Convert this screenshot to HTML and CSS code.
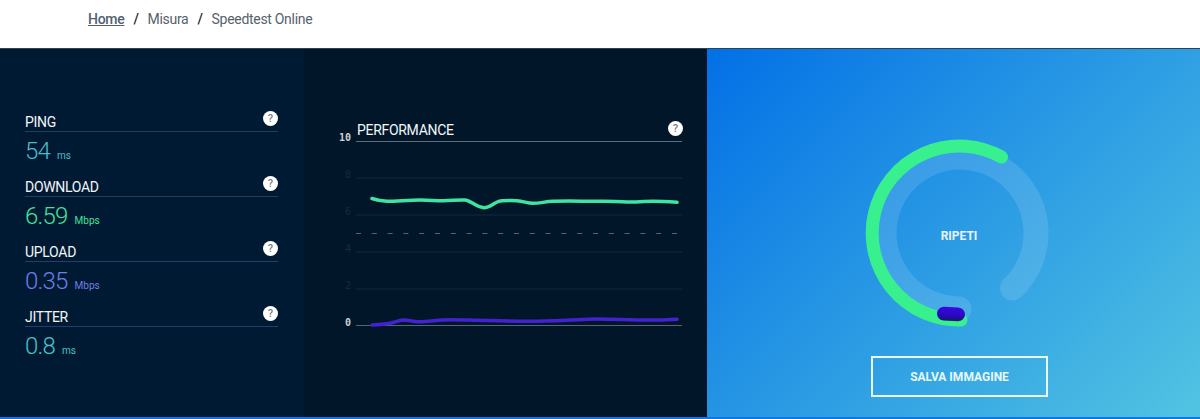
FILE: index.html
```html
<!DOCTYPE html>
<html>
<head>
    <meta charset="utf-8" />
    <title>Speedtest Online</title>
    <link rel="stylesheet" href="styles.css">
</head>
<body>
    <nav class="breadcrumb">
        <a href="#" class="crumb-home">Home</a>
        <span class="crumb-sep">/</span>
        <span>Misura</span>
        <span class="crumb-sep">/</span>
        <span>Speedtest Online</span>
    </nav>

    <main class="speedtest">
        <section class="results">
            <div class="metric metric-ping">
                <div class="metric-head"><span>PING</span><span class="help">?</span></div>
                <div class="metric-value">54 <small>ms</small></div>
            </div>
            <div class="metric metric-download">
                <div class="metric-head"><span>DOWNLOAD</span><span class="help">?</span></div>
                <div class="metric-value">6.59 <small>Mbps</small></div>
            </div>
            <div class="metric metric-upload">
                <div class="metric-head"><span>UPLOAD</span><span class="help">?</span></div>
                <div class="metric-value">0.35 <small>Mbps</small></div>
            </div>
            <div class="metric metric-jitter">
                <div class="metric-head"><span>JITTER</span><span class="help">?</span></div>
                <div class="metric-value">0.8 <small>ms</small></div>
            </div>
        </section>

        <section class="performance">
            <div class="performance-head"><span>PERFORMANCE</span><span class="help">?</span></div>
            <svg class="chart" viewBox="304 49 403 368" width="403" height="368">
                <line class="grid" x1="356" y1="178" x2="682" y2="178" />
                <line class="grid" x1="356" y1="215" x2="682" y2="215" />
                <line class="grid" x1="356" y1="252" x2="682" y2="252" />
                <line class="grid" x1="356" y1="289" x2="682" y2="289" />
                <line class="grid-mid" x1="356" y1="233.5" x2="680" y2="233.5" />
                <line class="grid-base" x1="356" y1="325.5" x2="682" y2="325.5" />
                <text class="tick tick-on" x="351" y="141" text-anchor="end">10</text>
                <text class="tick" x="351" y="178" text-anchor="end">8</text>
                <text class="tick" x="351" y="215" text-anchor="end">6</text>
                <text class="tick" x="351" y="252" text-anchor="end">4</text>
                <text class="tick" x="351" y="289" text-anchor="end">2</text>
                <text class="tick tick-on" x="351" y="326" text-anchor="end">0</text>
                <path class="line-down" d="M372 198.5 C378 200.5 381 201.2 387 201.3 C398 201.2 408 200 420 200 C430 200 435 200.7 443 200.7 C452 200.7 458 199.6 465 200 C471 200.6 477 207.7 484 207.7 C491 207.7 495 200.9 502 200.7 C508 200.5 511 200.4 517 200.7 C524 201.2 527 203.3 533 203.3 C540 203.3 545 201.6 553 201.3 C570 200.8 586 201.4 603 201.2 C612 201.1 618 202 627 202 C636 202 644 201.3 653 201.3 C662 201.3 668 201.7 677 202.3" />
                <path class="line-up" d="M372 325 C379 324.8 384 324.4 390 323.3 C395 322.3 398 320.2 404 320 C409 320 412 321.7 418 321.7 C429 321.6 439 319.7 450 319.7 C476 319.8 501 321.3 527 321.3 C541 321.3 553 320.9 567 320.3 C578 319.8 586 319 597 319 C616 319.2 634 320.1 653 320 C662 320 669 319.4 677 319.3" />
            </svg>
        </section>

        <section class="gauge-panel">
            <svg class="gauge" viewBox="0 0 200 200" width="200" height="200">
                <defs>
                    <linearGradient id="pillFill" x1="0" y1="0" x2="0" y2="1">
                        <stop offset="0" stop-color="#3c06e6" />
                        <stop offset="0.6" stop-color="#2a08c0" />
                        <stop offset="1" stop-color="#0f1a66" />
                    </linearGradient>
                </defs>
                <path class="gauge-track" d="M100 176 A76 76 0 1 1 153.5 155" />
                <path class="gauge-value" d="M142.5 24 A87 87 0 1 0 102 187" />
                <rect x="78" y="174" width="28" height="14" rx="7" fill="url(#pillFill)" transform="rotate(3 92 181)" />
                <text class="gauge-label" x="100" y="107" text-anchor="middle">RIPETI</text>
            </svg>
            <button class="save-button">SALVA IMMAGINE</button>
        </section>
    </main>
</body>
</html>
```

FILE: styles.css
```css
body {
    font-family: Roboto, Arial, sans-serif;
    margin: 0;
    padding: 0;
    height: 419px;
    overflow: hidden;
    background-color: white;
}

.breadcrumb {
    box-sizing: border-box;
    height: 49px;
    padding: 11px 0 0 88px;
    display: flex;
    align-items: baseline;
    gap: 9px;
    font-size: 14px;
    letter-spacing: -0.3px;
    color: #56626c;
    border-bottom: 1px solid #33414c;
}

.crumb-home {
    color: #4f6272;
    font-weight: 500;
    text-decoration: underline;
}

.crumb-sep {
    color: #1c2730;
    font-weight: 500;
}

.speedtest {
    display: flex;
    height: 368px;
    border-bottom: 2px solid #0b78e3;
}

.results {
    width: 304px;
    box-sizing: border-box;
    padding: 61px 26px 0 25px;
    background-color: #011a33;
}

.metric {
    height: 65px;
}

.metric-head,
.performance-head {
    display: flex;
    justify-content: space-between;
    color: #f2f6f8;
    font-size: 14px;
    letter-spacing: -0.3px;
}

.metric-head {
    height: 21px;
    align-items: flex-end;
    border-bottom: 1px solid #1d4258;
    line-height: 18px;
}

.metric-upload .metric-head,
.metric-jitter .metric-head {
    border-bottom-color: #213f68;
}

.help {
    align-self: flex-start;
    width: 15px;
    height: 15px;
    margin-top: 1px;
    border-radius: 50%;
    background-color: white;
    color: #77818a;
    font-size: 11px;
    font-weight: 500;
    line-height: 15px;
    letter-spacing: 0;
    text-align: center;
}

.metric-value {
    font-size: 24px;
    font-weight: 300;
    letter-spacing: -0.8px;
    line-height: 38px;
}

.metric-value small {
    font-size: 10px;
    font-weight: 400;
    letter-spacing: 0;
    margin-left: 2px;
}

.metric-ping .metric-value { color: #4bbccb; }
.metric-download .metric-value { color: #43e29a; }
.metric-upload .metric-value { color: #6e7fe6; }
.metric-jitter .metric-value { color: #46c1c9; }

.performance {
    width: 403px;
    display: grid;
    background-color: #011729;
}

.performance-head,
.chart {
    grid-row: 1;
    grid-column: 1;
}

.performance-head {
    align-self: start;
    box-sizing: border-box;
    width: 326px;
    height: 93px;
    margin-left: 52px;
    padding: 72px 0 0 1px;
    border-bottom: 1px solid #5d6d78;
    line-height: 19px;
}

.performance-head .help {
    margin: 0 -1px 0 0;
}

.chart {
    display: block;
}

.grid {
    stroke: #132a3c;
    stroke-width: 1;
}

.grid-mid {
    stroke: #55656f;
    stroke-width: 1;
    stroke-dasharray: 5 10.8;
}

.grid-base {
    stroke: #56656f;
    stroke-width: 1;
}

.tick {
    font-family: "DejaVu Sans Mono", monospace;
    font-size: 10px;
    fill: #17293a;
}

.tick-on {
    font-weight: 700;
    fill: #c9d1d6;
}

.line-down,
.line-up {
    fill: none;
    stroke-width: 3.5;
    stroke-linecap: round;
}

.line-down {
    stroke: #3fe3a2;
}

.line-up {
    stroke: #4422d4;
}

.gauge-panel {
    flex: 1;
    box-sizing: border-box;
    padding: 84px 0 0 12px;
    display: flex;
    flex-direction: column;
    align-items: center;
    background: linear-gradient(135deg, #0270e6, #52c4e2);
}

.gauge {
    display: block;
    margin-left: -2px;
}

.gauge-track,
.gauge-value {
    fill: none;
    stroke-linecap: round;
}

.gauge-track {
    stroke: rgba(255, 255, 255, 0.12);
    stroke-width: 25;
}

.gauge-value {
    stroke: #38f08e;
    stroke-width: 13;
}

.gauge-label {
    font-size: 12px;
    font-weight: 700;
    fill: #e6f4fb;
}

.save-button {
    width: 177px;
    height: 41px;
    margin-top: 23px;
    background: none;
    border: 2px solid #e8f7fb;
    color: #e8f7fb;
    font-family: inherit;
    font-size: 12px;
    font-weight: 700;
}
```
